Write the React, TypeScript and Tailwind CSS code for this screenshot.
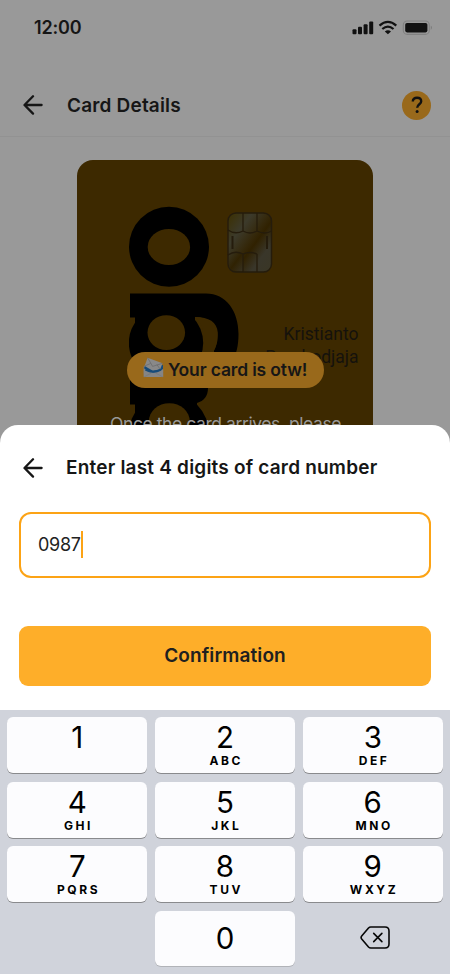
import React from "react";

function BackArrow({ className = "" }: { className?: string }) {
  return (
    <svg className={className} width="20" height="20" viewBox="0 0 20 20" fill="none" stroke="#161616" strokeWidth="2.3" strokeLinecap="round" strokeLinejoin="round">
      <path d="M18.600 10H1.700M10 1.300L1.500 10l8.500 8.600" />
    </svg>
  );
}

function StatusBar() {
  return (
    <div className="flex h-[56px] items-center justify-between pl-[34px] pr-[16px]">
      <span className="text-[18px] font-semibold leading-[20px] tracking-[-0.15px] text-[#161616]">12:00</span>
      <svg width="82" height="16" viewBox="0 0 82 16" className="shrink-0">
        <g fill="#111">
          <rect x="0.5" y="9.2" width="4" height="5" rx="1" />
          <rect x="6" y="6.8" width="4" height="7.4" rx="1" />
          <rect x="11.6" y="4.2" width="4" height="10" rx="1" />
          <rect x="17.2" y="1.4" width="4" height="12.8" rx="1" />
          <path d="M32.8 11.4q3.2-2.3 6.2 0L35.9 14.3z" />
        </g>
        <g fill="none" stroke="#111" strokeWidth="2.2">
          <path d="M27.5 5.6q8.4-7.3 16.8 0" />
          <path d="M30.3 9q5.6-4.900 11.200 0" />
        </g>
        <rect x="51.3" y="1" width="26" height="13.400" rx="4" fill="none" stroke="#818181" strokeWidth="1.100" />
        <rect x="53.200" y="3" width="22.200" height="9.400" rx="1.800" fill="#111" />
        <path d="M78.800 5.600q2.400 2 0 4.300z" fill="#7d7d7d" />
      </svg>
    </div>
  );
}

function Header() {
  return (
    <header className="flex h-[81px] items-center border-b border-[#929292] pl-[23px] pr-[19px] pt-[18px]">
      <BackArrow />
      <h1 className="ml-[24px] pt-[1px] text-[19px] font-semibold leading-[24px] tracking-[0.180px] text-[#161616]">Card Details</h1>
      <span className="ml-auto flex size-[29px] items-center justify-center rounded-full bg-[#99691b]">
        <svg width="12" height="18" viewBox="0 0 12 18" fill="none" stroke="#111" strokeWidth="2.400">
          <path d="M1.800 5.600C1.800 3 3.500 1.800 6 1.800s4.200 1.400 4.200 3.500c0 2.900-4 3-4 6.500" />
          <circle cx="6.100" cy="15.400" r="1.500" fill="#111" stroke="none" />
        </svg>
      </span>
    </header>
  );
}

function CardLogo() {
  return (
    <svg className="absolute left-[52px] top-[46px]" width="112" height="230" viewBox="129 206 112 230">
      <circle cx="169" cy="246.800" r="40" fill="#000" />
      <ellipse cx="168.900" cy="247" rx="21.200" ry="18" fill="#3d2900" />
      <path d="M130 293.600H206C226 293.600 238.500 311 238.500 334C238.500 357 230 371 213 374V352C220 344 220 317 195 317V340H135V317.500H130z" fill="#000" />
      <path d="M195 317c14 0 22 5 22.800 15.500c.4 8-1.300 13-3.800 18V375H203V333C203 325 199 320 195 317z" fill="#3d2900" />
      <ellipse cx="166" cy="343" rx="37.200" ry="37" fill="#000" />
      <ellipse cx="166.300" cy="332.600" rx="18.800" ry="17.400" fill="#3d2900" />
      <path d="M130 380H208V388C208 396 204 401 197 403V430H135V404.500H130z" fill="#000" />
      <ellipse cx="169" cy="434" rx="40" ry="41" fill="#000" />
      <ellipse cx="169.300" cy="421.500" rx="20.500" ry="18.300" fill="#3d2900" />
    </svg>
  );
}

function Chip() {
  return (
    <svg className="absolute left-[150px] top-[52px]" width="46" height="62" viewBox="0 0 46 62">
      <defs>
        <linearGradient id="chip" x1="0" y1="0" x2="1" y2="1">
          <stop offset="0" stopColor="#3c3000" />
          <stop offset=".28" stopColor="#3c3a2b" />
          <stop offset=".5" stopColor="#342709" />
          <stop offset=".57" stopColor="#302100" />
          <stop offset=".76" stopColor="#39362a" />
          <stop offset="1" stopColor="#3a3625" />
        </linearGradient>
        <linearGradient id="chipCorner" x1="0" y1="0" x2="1" y2="1">
          <stop offset="0" stopColor="#393522" />
          <stop offset=".5" stopColor="#302202" />
          <stop offset="1" stopColor="#383222" />
        </linearGradient>
      </defs>
      <rect x="1" y="1" width="43.500" height="59" rx="8" fill="url(#chip)" stroke="#251c0c" strokeWidth="1.400" />
      <path d="M2 43q7-5 14 0V59H9q-7 0-7-7z" fill="url(#chipCorner)" />
      <g fill="none" stroke="#251c0c" strokeWidth="1.300">
        <path d="M16 1v18M30 1v18M1 18q7 5 15 1q7 4 14 0q8 4 14.500 0M1 43q7-5 15-1q7-3 14 0M16 42v18M30 42v18" />
        <path d="M5.500 24v13M40 24v13" strokeWidth="2" />
      </g>
    </svg>
  );
}

function Envelope() {
  return (
    <svg width="21" height="21" viewBox="0 0 21 21" className="relative top-[-2px] shrink-0">
      <path d="M.6 9.500L5 6l15 4v10H.8z" fill="#7c7d7f" />
      <path d="M1 11.200l9 6 10-5V8L2 9z" fill="#174b79" />
      <path d="M4.600.7l14.900 5.600-2.300 6-7.300 1.500L1.600 9z" fill="#898989" />
      <path d="M4.600.7l5 8.700 9.900-3.100M1.600 9l6-2.500M17.200 12.300l-3.300-4.800" fill="none" stroke="#686868" strokeWidth=".7" />
      <path d="M.7 12.200q9.500 6.500 19.500 0V20H.8z" fill="#858585" />
      <path d="M2.500 12.600q7.500 4.500 15.500 0" fill="none" stroke="#174b79" strokeWidth="2" />
      <path d="M1 20l7.500-4M20 20l-7.500-4" stroke="#757575" strokeWidth=".6" />
    </svg>
  );
}

function BankCard() {
  return (
    <div className="relative mx-[77px] mt-[23px] h-[300px] rounded-[16px] bg-[#3d2900]">
      <CardLogo />
      <Chip />
      <p className="absolute right-[14.500px] top-[163px] text-right font-[Roboto,sans-serif] text-[17.500px] leading-[22.500px] text-[#15120c]">
        Kristianto<br />Poerbodjaja
      </p>
      <div className="absolute left-[50px] top-[191.500px] flex h-[36px] w-[197px] items-center rounded-full bg-[#99691b] pl-[16px]">
        <Envelope />
        <span className="ml-[4px] whitespace-nowrap text-[17.500px] font-semibold leading-[22px] tracking-[-0.160px] text-[#161616]">Your card is otw!</span>
      </div>
      <p className="absolute left-[33px] top-[252px] whitespace-nowrap text-[17.500px] leading-[24px] tracking-[-0.420px] text-[#999]">Once the card arrives, please</p>
    </div>
  );
}

function Key({ digit, letters }: { digit: string; letters?: string }) {
  return (
    <button className="flex h-[56px] flex-col items-center rounded-[6px] bg-[#fcfcfe] pt-[4px] text-black shadow-[0_1px_0_#898a8d]">
      <span className="text-[29.500px] font-normal leading-[33px]">{digit}</span>
      {letters && <span className="pl-[2.600px] text-[12px] font-bold leading-[14px] tracking-[2.600px]">{letters}</span>}
    </button>
  );
}

const keys: [string, string?][] = [
  ["1"], ["2", "ABC"], ["3", "DEF"],
  ["4", "GHI"], ["5", "JKL"], ["6", "MNO"],
  ["7", "PQRS"], ["8", "TUV"], ["9", "WXYZ"],
];

function Keypad() {
  return (
    <div className="grid h-[263.700px] grid-cols-3 content-start gap-x-[7.300px] gap-y-[8.700px] bg-[#d0d3db] px-[7px] pt-[7px]">
      {keys.map(([digit, letters]) => <Key key={digit} digit={digit} letters={letters} />)}
      <span />
      <button className="flex h-[55px] items-center justify-center rounded-[6px] bg-[#fcfcfe] pb-[2px] text-[29.500px] font-normal leading-[34px] text-black shadow-[0_1px_0_#b1b3b8]">0</button>
      <button className="flex h-[55px] items-center justify-center pb-[2px] pl-[5px]" aria-label="Delete">
        <svg width="30" height="23" viewBox="0 0 30 23" fill="none" stroke="#070707" strokeWidth="1.600" strokeLinejoin="round" strokeLinecap="round">
          <path d="M10.800 1H25Q29 1 29 5V18Q29 22 25 22H10.800Q9.500 22 8.500 21L1.700 13Q.5 11.500 1.700 10L8.500 2Q9.500 1 10.800 1z" />
          <path d="M13.700 7.400l8.200 8.200M21.900 7.400l-8.200 8.200" />
        </svg>
      </button>
    </div>
  );
}

export default function App() {
  return (
    <main className="h-[975px] w-[450px] overflow-hidden bg-[#999] font-[Inter,sans-serif]">
      <section className="h-[424.500px] overflow-hidden">
        <StatusBar />
        <Header />
        <BankCard />
      </section>
      <section className="h-[551px] overflow-hidden rounded-t-[18px] bg-white">
        <div className="flex h-[87px] items-center pl-[23px]">
          <BackArrow />
          <h2 className="ml-[23px] whitespace-nowrap text-[19px] font-semibold leading-[24px] tracking-[0.200px] text-[#161616]">Enter last 4 digits of card number</h2>
        </div>
        <div className="mx-[19px] flex h-[66.500px] items-center rounded-[12px] border-[2.500px] border-[#fca315] pl-[17px]">
          <span className="text-[18px] leading-[24px] tracking-[-0.300px] text-[#222]">0987</span>
          <span className="h-[27px] w-[2px] bg-[#fca315]" />
        </div>
        <button className="mx-[19px] mt-[48px] flex h-[60px] w-[412px] items-center justify-center rounded-[9px] bg-[#feae29] pt-[1px] text-[19px] font-semibold tracking-[0.120px] text-[#202020]">
          Confirmation
        </button>
        <div className="mt-[24px]">
          <Keypad />
        </div>
      </section>
    </main>
  );
}
